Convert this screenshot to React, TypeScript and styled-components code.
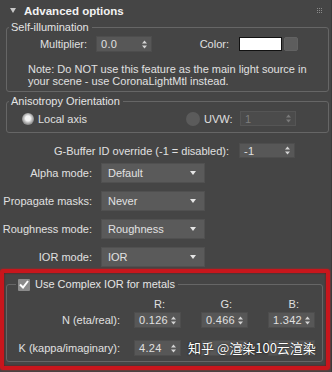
import styled, { createGlobalStyle } from "styled-components";

const GlobalStyle = createGlobalStyle`
  html, body {
    margin: 0;
    padding: 0;
    background: #454545;
  }
  body {
    font-family: "Liberation Sans", Arial, sans-serif;
    font-size: 11px;
    color: #e0e0e0;
  }
`;

const Panel = styled.div`
  position: relative;
  width: 332px;
  height: 372px;
  overflow: hidden;
  box-sizing: border-box;
  background: #454545;
  border-right: 1px solid #3a3a3a;
  display: flex;
  flex-direction: column;
`;

const Header = styled.div`
  height: 21px;
  flex-shrink: 0;
  display: flex;
  align-items: center;
  padding: 0 9px 0 10px;
  gap: 8px;
`;

const Title = styled.span`
  flex: 1;
  font-weight: bold;
  font-size: 11.5px;
  color: #f2f2f2;
`;

const Group = styled.fieldset<{ $mt?: number; $ml?: number; $mr?: number }>`
  margin: ${(p) => p.$mt ?? 0}px ${(p) => p.$mr ?? 2}px 0 ${(p) => p.$ml ?? 6}px;
  padding: 0 0 0 2px;
  border: 1px solid #666666;
  border-radius: 3px;
  min-width: 0;
`;

const Legend = styled.legend<{ $ml?: number }>`
  margin-left: ${(p) => p.$ml ?? 0}px;
  padding: 0 3px 0 2px;
  line-height: 13px;
  font-size: 11px;
  color: #e4e4e4;
  display: flex;
  align-items: center;
  gap: 5px;
`;

const Row = styled.div<{ $mt?: number; $h?: number }>`
  display: flex;
  align-items: center;
  height: ${(p) => p.$h ?? 16}px;
  margin-top: ${(p) => p.$mt ?? 0}px;
  flex-shrink: 0;
`;

const Label = styled.span<{ $w: number; $gap?: number }>`
  width: ${(p) => p.$w}px;
  margin-right: ${(p) => p.$gap ?? 9}px;
  text-align: right;
  white-space: nowrap;
  flex-shrink: 0;
`;

const Note = styled.div`
  margin: 11px 0 4px 0;
  padding-left: 19px;
  line-height: 12px;
  white-space: nowrap;
`;

const SpinnerBox = styled.div<{ $w: number; $h?: number; $disabled?: boolean }>`
  width: ${(p) => p.$w}px;
  height: ${(p) => p.$h ?? 16}px;
  box-sizing: border-box;
  flex-shrink: 0;
  display: flex;
  align-items: center;
  justify-content: space-between;
  padding: 0 4px 0 4px;
  background: ${(p) => (p.$disabled ? "#4b4b4b" : "#575757")};
  border: 1px solid ${(p) => (p.$disabled ? "#555555" : "#4d4d4d")};
  color: ${(p) => (p.$disabled ? "#7e7e7e" : "#e0e0e0")};
  letter-spacing: 0.3px;
`;

const Arrows = ({ color }: { color: string }) => (
  <svg width="5" height="9" viewBox="0 0 5 9">
    <path d="M0 3.5 L2.5 0.5 L5 3.5 Z M0 5.5 L5 5.5 L2.5 8.5 Z" fill={color} />
  </svg>
);

function Spinner({ value, w, h, disabled }: { value: string; w: number; h?: number; disabled?: boolean }) {
  return (
    <SpinnerBox $w={w} $h={h} $disabled={disabled}>
      <span>{value}</span>
      <Arrows color={disabled ? "#7a7a7a" : "#d4d4d4"} />
    </SpinnerBox>
  );
}

const DropBox = styled.div`
  width: 104px;
  height: 20px;
  box-sizing: border-box;
  display: flex;
  align-items: center;
  justify-content: space-between;
  padding: 0 8px 0 6px;
  background: #5a5a5a;
  border: 1px solid #505050;
  color: #e2e2e2;
`;

function Dropdown({ value }: { value: string }) {
  return (
    <DropBox>
      <span>{value}</span>
      <svg width="6" height="4" viewBox="0 0 6 4">
        <path d="M0 0 L6 0 L3 4 Z" fill="#e6e6e6" />
      </svg>
    </DropBox>
  );
}

const Swatch = styled.div`
  width: 43px;
  height: 14px;
  box-sizing: border-box;
  background: #ffffff;
  border: 1px solid #111111;
  flex-shrink: 0;
`;

const MapSlot = styled.div`
  width: 14px;
  height: 14px;
  margin-left: 2px;
  box-sizing: border-box;
  background: #5d5d5d;
  border: 1px solid #626262;
  border-radius: 2px;
`;

const Radio = styled.span<{ $on?: boolean; $size: number }>`
  width: ${(p) => p.$size}px;
  height: ${(p) => p.$size}px;
  border-radius: 50%;
  flex-shrink: 0;
  margin-right: 4px;
  background: ${(p) =>
    p.$on
      ? "radial-gradient(circle at 50% 45%, #f4f4f4 0 2.5px, #c4c4c4 4px, #8e8e8e 6px)"
      : "#5b5b5b"};
`;

const Option = styled.div<{ $w?: number; $ml?: number }>`
  display: flex;
  align-items: center;
  width: ${(p) => (p.$w ? `${p.$w}px` : "auto")};
  margin-left: ${(p) => p.$ml ?? 0}px;
  flex-shrink: 0;
`;

const Check = styled.span`
  width: 12px;
  height: 12px;
  border-radius: 1px;
  background: #8b8b8b;
  display: flex;
  align-items: center;
  justify-content: center;
`;

const RedFrame = styled.div`
  position: relative;
  margin-top: 2px;
  width: 330px;
  height: 101px;
  box-sizing: border-box;
  border: 4px solid #c8161c;
  border-radius: 3px;
  box-shadow: 0 0 2px rgba(220, 20, 20, 0.8), inset 0 0 2px rgba(120, 0, 0, 0.9);
  flex-shrink: 0;
`;

const IorBody = styled.div`
  display: flex;
  flex-direction: column;
  padding: 7px 0 5px 0;
`;

const IorRow = styled.div<{ $mt?: number; $h: number }>`
  display: flex;
  align-items: center;
  gap: 20px;
  height: ${(p) => p.$h}px;
  margin-top: ${(p) => p.$mt ?? 0}px;
`;

const IorLabel = styled.span`
  width: 125px;
  flex-shrink: 0;
  box-sizing: border-box;
  margin-right: -20px;
  text-align: right;
  padding-right: 14px;
  white-space: nowrap;
`;

const ColHead = styled.span`
  width: 47px;
  flex-shrink: 0;
  box-sizing: border-box;
  text-align: right;
  padding-right: 16px;
`;

const Watermark = styled.div`
  position: absolute;
  left: 184px;
  top: 66px;
  font-family: "Noto Sans CJK SC", "Liberation Sans", sans-serif;
  font-size: 13px;
  line-height: 18px;
  color: #ffffff;
  text-shadow: 0 0 2px #222, 0 0 1px #222;
  white-space: nowrap;
`;

export default function App() {
  return (
    <>
      <GlobalStyle />
      <Panel>
        <Header>
          <svg width="6" height="5" viewBox="0 0 6 5">
            <path d="M0 0 L6 0 L3 5 Z" fill="#c8c8c8" />
          </svg>
          <Title>Advanced options</Title>
          <svg width="5" height="5" viewBox="0 0 5 5">
            <g fill="#8a8a8a">
              <rect x="0" y="0" width="1" height="1" />
              <rect x="2" y="0" width="1" height="1" />
              <rect x="4" y="0" width="1" height="1" />
              <rect x="0" y="2" width="1" height="1" />
              <rect x="2" y="2" width="1" height="1" />
              <rect x="4" y="2" width="1" height="1" />
              <rect x="0" y="4" width="1" height="1" />
              <rect x="2" y="4" width="1" height="1" />
              <rect x="4" y="4" width="1" height="1" />
            </g>
          </svg>
        </Header>

        <Group>
          <Legend>Self-illumination</Legend>
          <Row $mt={2}>
            <Label $w={78}>Multiplier:</Label>
            <Spinner value="0.0" w={56} />
            <Label $w={77} $gap={10}>Color:</Label>
            <Swatch />
            <MapSlot />
          </Row>
          <Note>
            Note: Do NOT use this feature as the main light source in
            <br />
            your scene - use CoronaLightMtl instead.
          </Note>
        </Group>

        <Group $mt={3}>
          <Legend>Anisotropy Orientation</Legend>
          <Row $mt={3} $h={15} style={{ marginBottom: 6 }}>
            <Option $w={164} $ml={13}>
              <Radio $on $size={12} />
              Local axis
            </Option>
            <Option>
              <Radio $size={14} />
              <Label $w={26} $gap={10} style={{ textAlign: "left" }}>UVW:</Label>
              <Spinner value="1" w={56} h={15} disabled />
            </Option>
          </Row>
        </Group>

        <Row $mt={10} $h={15}>
          <Label $w={229} $gap={10}>G-Buffer ID override (-1 = disabled):</Label>
          <Spinner value="-1" w={56} h={15} />
        </Row>

        <Row $mt={5} $h={20}>
          <Label $w={92}>Alpha mode:</Label>
          <Dropdown value="Default" />
        </Row>
        <Row $mt={8} $h={20}>
          <Label $w={92}>Propagate masks:</Label>
          <Dropdown value="Never" />
        </Row>
        <Row $mt={8} $h={20}>
          <Label $w={92}>Roughness mode:</Label>
          <Dropdown value="Roughness" />
        </Row>
        <Row $mt={8} $h={20}>
          <Label $w={92}>IOR mode:</Label>
          <Dropdown value="IOR" />
        </Row>

        <RedFrame>
          <Group $mt={5} $ml={2} $mr={3}>
            <Legend $ml={7}>
              <Check>
                <svg width="10" height="9" viewBox="0 0 10 9">
                  <path d="M1 4.5 L4 7.5 L9 1" stroke="#ffffff" strokeWidth="2" fill="none" />
                </svg>
              </Check>
              Use Complex IOR for metals
            </Legend>
            <IorBody>
              <IorRow $h={12}>
                <IorLabel />
                <ColHead>R:</ColHead>
                <ColHead>G:</ColHead>
                <ColHead>B:</ColHead>
              </IorRow>
              <IorRow $h={16} $mt={2}>
                <IorLabel>N (eta/real):</IorLabel>
                <Spinner value="0.126" w={47} />
                <Spinner value="0.466" w={47} />
                <Spinner value="1.342" w={47} />
              </IorRow>
              <IorRow $h={16} $mt={12}>
                <IorLabel>K (kappa/imaginary):</IorLabel>
                <Spinner value="4.24" w={47} />
                <Spinner value="" w={47} />
                <Spinner value="" w={47} />
              </IorRow>
            </IorBody>
          </Group>
          <Watermark>知乎 @渲染100云渲染</Watermark>
        </RedFrame>
      </Panel>
    </>
  );
}
